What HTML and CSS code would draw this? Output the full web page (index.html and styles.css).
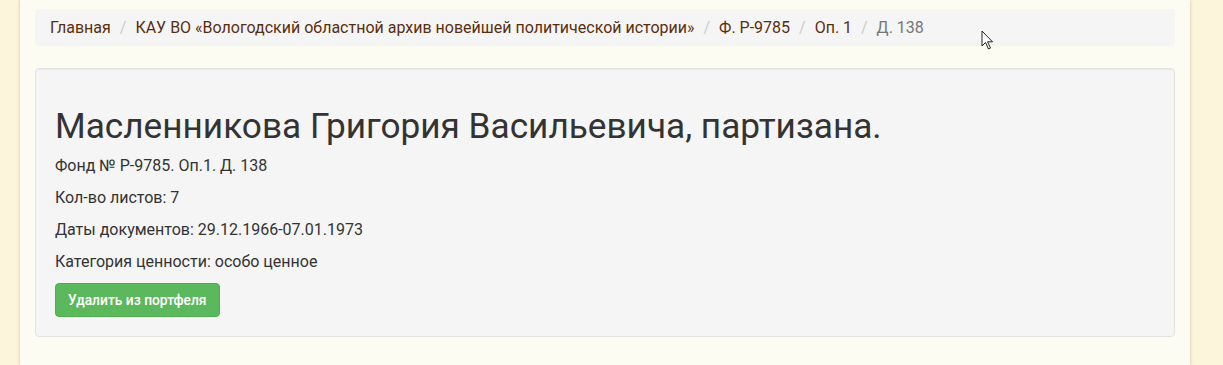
FILE: index.html
```html
<!DOCTYPE html>
<html lang="ru">
<head>
  <meta charset="UTF-8" />
  <meta name="viewport" content="width=device-width, initial-scale=1.0" />
  <title>Д. 138 - Портфель</title>
  <link rel="stylesheet" href="styles.css">
</head>
<body>
  <div class="container">
    <!-- Навигация -->
    <ol class="breadcrumb">
      <li><a href="#">Главная</a></li>
      <li><a href="#">КАУ ВО «Вологодский областной архив новейшей политической истории»</a></li>
      <li><a href="#">Ф. Р-9785</a></li>
      <li><a href="#">Оп. 1</a></li>
      <li class="active">Д. 138</li>
    </ol>

    <!-- Карточка дела -->
    <div class="well">
      <h1>Масленникова Григория Васильевича, партизана.</h1>
      <p>Фонд № Р-9785. Оп.1. Д. 138</p>
      <p>Кол-во листов: 7</p>
      <p>Даты документов: 29.12.1966-07.01.1973</p>
      <p>Категория ценности: особо ценное</p>
      <button class="btn btn-success">Удалить из портфеля</button>
    </div>
  </div>

  <svg class="cursor" width="14" height="20" viewBox="0 0 14 20">
    <path d="M1 1 L1 16 L4.5 12.5 L7.5 19 L9.5 18 L6.5 11.8 L11.5 11.8 Z" fill="#fff" stroke="#222" stroke-width="1"/>
  </svg>
</body>
</html>
```

FILE: styles.css
```css
body {
  font-family: Roboto, "Liberation Sans", sans-serif;
  font-size: 16px;
  line-height: 1.42857;
  color: #333;
  margin: 0;
  padding: 0;
  background: #fdf4dc;
}

.container {
  box-sizing: border-box;
  width: 1170px;
  min-height: 365px;
  margin-left: 20px;
  padding: 9px 15px 0;
  background: #fcfcf3;
  box-shadow: 0 0 3px rgba(120, 100, 60, 0.35);
}

.breadcrumb {
  list-style: none;
  margin: 0 0 22px;
  padding: 8px 15px;
  font-size: 16px;
  line-height: 21px;
  background: #f5f5f5;
  border-radius: 4px;
}

.breadcrumb li {
  display: inline-block;
}

.breadcrumb li + li:before {
  content: "/\00a0";
  padding: 0 5px;
  color: #ccc;
}

.breadcrumb a {
  color: #5a2e0c;
  text-decoration: none;
}

.breadcrumb .active {
  color: #777;
}

.well {
  padding: 19px;
  background: #f5f5f5;
  border: 1px solid #e3e3e3;
  border-radius: 4px;
  box-shadow: inset 0 1px 1px rgba(0, 0, 0, 0.05);
}

.well h1 {
  font-size: 35.2px;
  font-weight: 400;
  line-height: 1.1;
  margin: 19px 0 9px;
}

.well p {
  margin: 0 0 10px;
  line-height: 22px;
}

.btn {
  font-family: inherit;
  font-size: 13.8px;
  font-weight: 500;
  line-height: 20px;
  padding: 6px 12px;
  border-radius: 4px;
  cursor: pointer;
}

.btn-success {
  color: #fff;
  background: #5cb85c;
  border: 1px solid #4cae4c;
}

.cursor {
  position: absolute;
  left: 981px;
  top: 30px;
}
```
